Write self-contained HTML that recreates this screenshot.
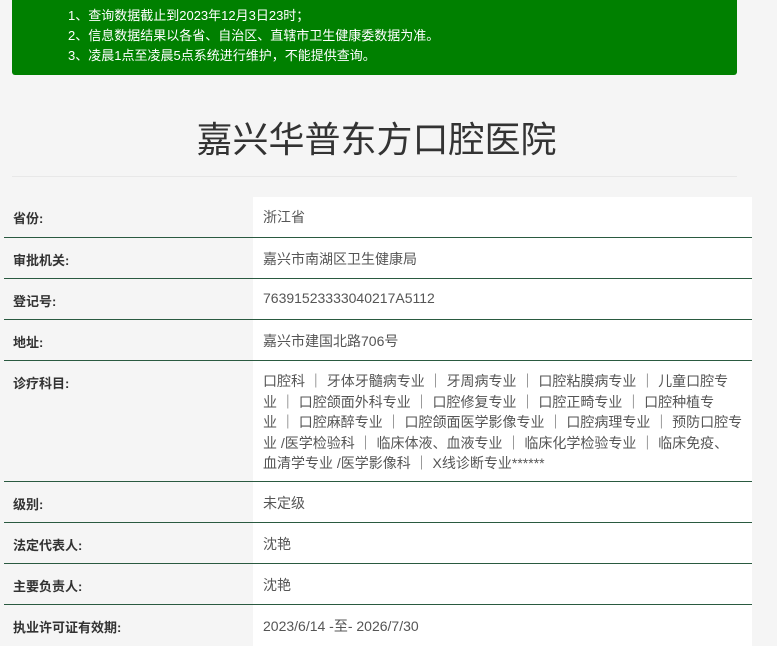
<!DOCTYPE html>
<html><head><meta charset="utf-8"><style>
*{margin:0;padding:0;box-sizing:border-box}
body{width:777px;height:638px;overflow:hidden;background:#f5f5f5;font-family:"Liberation Sans","Noto Sans CJK SC",sans-serif;position:relative}
.notice{position:absolute;left:12px;top:0;width:725px;height:75px;background:#008000;border-radius:0 0 3px 3px;color:#fff;font-size:13px;line-height:20px;padding:6px 0 0 56px}
h1{position:absolute;left:-12px;width:777px;top:116px;text-align:center;font-size:36px;font-weight:normal;color:#333;line-height:48px}
.hr{position:absolute;left:12px;top:176px;width:725px;height:1px;background:#e8e8e8}
.row{position:absolute;left:4px;width:748px;border-bottom:1px solid #2a5a40}
.lab{position:absolute;left:9px;top:0;font-size:13px;font-weight:bold;color:#333}
.val{position:absolute;left:249px;top:0;right:0;bottom:0;background:#fff;padding:0 10px;font-size:14px;color:#555}
</style></head><body>
<div class="notice">1、查询数据截止到2023年12月3日23时；<br>2、信息数据结果以各省、自治区、直辖市卫生健康委数据为准。<br>3、凌晨1点至凌晨5点系统进行维护，不能提供查询。</div>
<h1>嘉兴华普东方口腔医院</h1>
<div class="hr"></div>

<div class="row" style="top:197px;height:41px"><div class="lab" style="top:11px">省份:</div><div class="val" style="padding-top:10px">浙江省</div></div>
<div class="row" style="top:238px;height:41px"><div class="lab" style="top:12px">审批机关:</div><div class="val" style="padding-top:11px">嘉兴市南湖区卫生健康局</div></div>
<div class="row" style="top:279px;height:41px"><div class="lab" style="top:12px">登记号:</div><div class="val" style="padding-top:11px">76391523333040217A5112</div></div>
<div class="row" style="top:320px;height:41px"><div class="lab" style="top:12px">地址:</div><div class="val" style="padding-top:11px">嘉兴市建国北路706号</div></div>
<div class="row" style="top:361px;height:121px"><div class="lab" style="top:12px">诊疗科目:</div><div class="val" style="padding-top:10px;line-height:20.5px;white-space:nowrap">口腔科 ｜ 牙体牙髓病专业 ｜ 牙周病专业 ｜ 口腔粘膜病专业 ｜ 儿童口腔专<br>业 ｜ 口腔颌面外科专业 ｜ 口腔修复专业 ｜ 口腔正畸专业 ｜ 口腔种植专<br>业 ｜ 口腔麻醉专业 ｜ 口腔颌面医学影像专业 ｜ 口腔病理专业 ｜ 预防口腔专<br>业 /医学检验科 ｜ 临床体液、血液专业 ｜ 临床化学检验专业 ｜ 临床免疫、<br>血清学专业 /医学影像科 ｜ X线诊断专业******</div></div>
<div class="row" style="top:482px;height:41px"><div class="lab" style="top:12px">级别:</div><div class="val" style="padding-top:11px">未定级</div></div>
<div class="row" style="top:523px;height:41px"><div class="lab" style="top:12px">法定代表人:</div><div class="val" style="padding-top:11px">沈艳</div></div>
<div class="row" style="top:564px;height:41px"><div class="lab" style="top:12px">主要负责人:</div><div class="val" style="padding-top:11px">沈艳</div></div>
<div class="row" style="top:605px;height:41px;border:none"><div class="lab" style="top:12px">执业许可证有效期:</div><div class="val" style="padding-top:11px">2023/6/14 -至- 2026/7/30</div></div>
</body></html>
